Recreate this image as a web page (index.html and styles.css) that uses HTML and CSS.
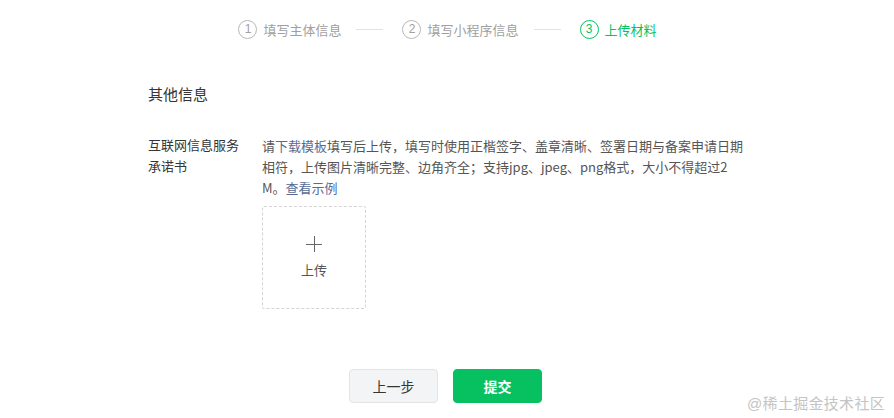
FILE: index.html
```html
<!DOCTYPE html>
<html lang="zh">
<head>
<meta charset="utf-8">
<link rel="stylesheet" href="styles.css">
</head>
<body>
<div class="page">
  <div class="steps">
    <div class="step"><span class="num">1</span><span class="step-text">填写主体信息</span></div>
    <span class="step-line"></span>
    <div class="step"><span class="num">2</span><span class="step-text">填写小程序信息</span></div>
    <span class="step-line"></span>
    <div class="step active"><span class="num">3</span><span class="step-text">上传材料</span></div>
  </div>

  <div class="content">
    <h2 class="section-title">其他信息</h2>
    <div class="form-row">
      <div class="label">互联网信息服务<br>承诺书</div>
      <div class="field">
        <p class="desc">请<span class="link">下载模板</span>填写后上传，填写时使用正楷签字、盖章清晰、签署日期与备案申请日期相符，上传图片清晰完整、边角齐全；支持jpg、jpeg、png格式，大小不得超过2M。<span class="link">查看示例</span></p>
        <div class="upload">
          <span class="plus"></span>
          <span class="upload-text">上传</span>
        </div>
      </div>
    </div>
  </div>

  <div class="actions">
    <button class="btn btn-default">上一步</button>
    <button class="btn btn-primary">提交</button>
  </div>

  <div class="watermark">@稀土掘金技术社区</div>
</div>
</body>
</html>
```

FILE: styles.css
```css
* { box-sizing: border-box; }
html, body { margin: 0; padding: 0; background: #fff; }
body {
  font-family: "Liberation Sans", "Noto Sans CJK SC", sans-serif;
  color: #353535;
  width: 894px;
  height: 418px;
  overflow: hidden;
}
.page { position: relative; height: 418px; }

.steps {
  display: flex;
  justify-content: center;
  align-items: center;
  height: 58px;
  padding-left: 1px;
}
.step { display: flex; align-items: center; }
.num {
  width: 19px; height: 19px;
  border: 1px solid #b8b8b8;
  border-radius: 50%;
  display: flex; align-items: center; justify-content: center;
  font-size: 12px; color: #a0a0a0;
  line-height: 1;
}
.step-text { margin-left: 6px; font-size: 13px; color: #a0a0a0; }
.step-line {
  width: 27px; height: 1px; background: #e2e2e2;
  margin: 0 19px 0 15px;
}
.step.active .num { border-color: #07c160; color: #07c160; }
.step.active .step-text { color: #07c160; }

.content { padding-left: 148px; }
.section-title {
  margin: 26px 0 0;
  font-size: 15px;
  font-weight: normal;
  line-height: 22px;
  color: #353535;
}
.form-row { display: flex; margin-top: 29px; }
.label {
  width: 114px;
  font-size: 13px;
  line-height: 21px;
  color: #353535;
}
.field { width: 486px; }
.desc {
  margin: 0;
  font-family: "Noto Sans CJK SC", sans-serif;
  font-size: 13px;
  line-height: 21px;
  color: #555;
  word-break: break-all;
}
.link { color: #576b95; }

.upload {
  margin-top: 8px;
  width: 104px; height: 103px;
  border: 1px dashed #d4d4d4;
  border-radius: 2px;
  display: flex; flex-direction: column; align-items: center;
  padding-top: 29px;
}
.plus {
  position: relative;
  width: 16px; height: 16px;
}
.plus::before, .plus::after {
  content: "";
  position: absolute;
  background: #666;
}
.plus::before { left: 0; right: 0; top: 7.5px; height: 1px; }
.plus::after { top: 0; bottom: 0; left: 7.5px; width: 1px; }
.upload-text { margin-top: 10px; font-size: 13px; color: #555; line-height: 18px; }

.actions {
  display: flex;
  justify-content: center;
  gap: 15px;
  margin-top: 60px;
  padding-right: 3px;
}
.btn {
  width: 89px; height: 34px;
  border-radius: 4px;
  font-family: inherit;
  font-size: 14px;
  cursor: pointer;
}
.btn-default { background: #f3f4f5; border: 1px solid #e4e4e4; color: #353535; }
.btn-primary { background: #07c160; border: 1px solid #07c160; color: #fff; font-weight: bold; }

.watermark {
  position: absolute;
  right: 9px;
  bottom: 5px;
  font-size: 15px;
  color: #c4c4c4;
  letter-spacing: 0.3px;
}
```
